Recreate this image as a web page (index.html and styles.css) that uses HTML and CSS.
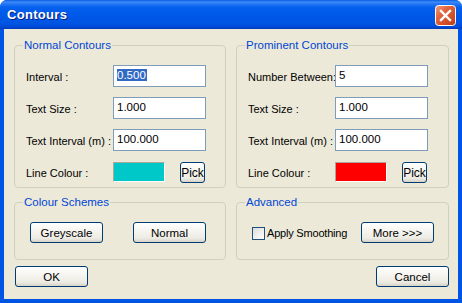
FILE: index.html
```html
<!DOCTYPE html>
<html>
<head>
<meta charset="utf-8">
<link rel="stylesheet" href="styles.css">
</head>
<body>
<div class="window">
  <div class="titlebar">
    <span class="title">Contours</span>
    <span class="close">
      <svg width="21" height="21" viewBox="0 0 21 21">
        <defs>
          <linearGradient id="cg" x1="0" y1="0" x2="1" y2="1">
            <stop offset="0" stop-color="#F0A080"/>
            <stop offset="0.35" stop-color="#E2653F"/>
            <stop offset="1" stop-color="#C23A14"/>
          </linearGradient>
        </defs>
        <rect x="0.5" y="0.5" width="20" height="20" rx="3" fill="url(#cg)" stroke="#FFFFFF"/>
        <path d="M6 6 L15 15 M15 6 L6 15" stroke="#FFFFFF" stroke-width="2.4" stroke-linecap="square"/>
      </svg>
    </span>
  </div>
  <div class="client">
    <div class="groups">
      <fieldset class="group">
        <legend>Normal Contours</legend>
        <div class="form">
          <span class="label">Interval :</span>
          <span class="field"><span class="sel">0.500</span></span>
          <span class="label">Text Size :</span>
          <span class="field">1.000</span>
          <span class="label">Text Interval (m) :</span>
          <span class="field">100.000</span>
          <span class="label last">Line Colour :</span>
          <span class="colour-row">
            <span class="swatch cyan"></span>
            <span class="btn pick">Pick</span>
          </span>
        </div>
      </fieldset>
      <fieldset class="group">
        <legend>Prominent Contours</legend>
        <div class="form">
          <span class="label">Number Between:</span>
          <span class="field">5</span>
          <span class="label">Text Size :</span>
          <span class="field">1.000</span>
          <span class="label">Text Interval (m) :</span>
          <span class="field">100.000</span>
          <span class="label last">Line Colour :</span>
          <span class="colour-row">
            <span class="swatch red"></span>
            <span class="btn pick">Pick</span>
          </span>
        </div>
      </fieldset>
      <fieldset class="group small">
        <legend>Colour Schemes</legend>
        <div class="btnrow">
          <span class="btn">Greyscale</span>
          <span class="btn">Normal</span>
        </div>
      </fieldset>
      <fieldset class="group small">
        <legend>Advanced</legend>
        <div class="btnrow adv">
          <span class="check"><span class="box"></span>Apply Smoothing</span>
          <span class="btn">More &gt;&gt;&gt;</span>
        </div>
      </fieldset>
    </div>
    <div class="footer">
      <span class="btn">OK</span>
      <span class="btn">Cancel</span>
    </div>
  </div>
</div>
</body>
</html>
```
FILE: styles.css
```css
html, body {
  margin: 0;
  padding: 0;
  background: #ffffff;
}
.window {
  width: 462px;
  height: 303px;
  display: flex;
  flex-direction: column;
  box-sizing: border-box;
  background: #0054E3;
  border-radius: 7px 7px 0 0;
  overflow: hidden;
  font-family: "Liberation Sans", Arial, sans-serif;
  font-size: 11px;
  color: #000000;
}
.titlebar {
  height: 29px;
  flex: none;
  display: flex;
  align-items: center;
  justify-content: space-between;
  padding: 0 6px 0 7px;
  box-sizing: border-box;
  background: linear-gradient(#0A5BE6 0%, #3D8CF6 7%, #2A7BF4 12%, #0460EE 25%, #0058E8 55%, #0055E3 80%, #0049D6 93%, #0039B5 100%);
}
.title {
  font-family: "Liberation Sans", sans-serif;
  font-weight: bold;
  font-size: 13px;
  color: #ffffff;
  text-shadow: 1px 1px 0 #0A1E80;
  letter-spacing: 0.3px;
}
.close {
  width: 21px;
  height: 21px;
  display: block;
  margin-top: 2px;
}
.close svg {
  display: block;
}
.client {
  flex: 1;
  margin: 0 4px 4px 4px;
  background: #ECE9D8;
  padding: 10px 9px 0 10px;
  display: flex;
  flex-direction: column;
}
.groups {
  display: grid;
  grid-template-columns: 212px 213px;
  column-gap: 10px;
  row-gap: 8px;
}
.group {
  margin: 0;
  padding: 13px 0 4px 11px;
  border: 1px solid #D0D0BF;
  border-radius: 4px;
  min-width: 0;
}
.group legend {
  color: #0046D5;
  padding: 0 1px 0 1px;
  margin-left: -3px;
  line-height: 13px;
  font-size: 11.5px;
}
.group.small legend {
  margin-left: -7px;
}
.form {
  display: grid;
  grid-template-columns: 87px 93px;
  grid-auto-rows: 22px;
  row-gap: 10px;
  align-items: center;
}
.label {
  padding-top: 1px;
  white-space: nowrap;
}
.label.last {
  margin-top: 1px;
  align-self: start;
  padding-top: 5px;
}
.field {
  height: 22px;
  box-sizing: border-box;
  border: 1px solid #7F9DB9;
  background: #ffffff;
  padding: 3px 0 0 3px;
  line-height: 13px;
  font-size: 11.5px;
}
.sel {
  background: #316AC5;
  color: #ffffff;
  display: inline-block;
  line-height: 12px;
  padding-right: 1px;
}
.colour-row {
  display: flex;
  align-items: flex-start;
  gap: 15px;
  height: 22px;
  margin-top: 1px;
  align-self: start;
}
.swatch {
  width: 52px;
  height: 20px;
  box-sizing: border-box;
  border-style: solid;
  border-width: 1px;
  border-color: #ACA899 #FFFFFF #FFFFFF #ACA899;
}
.cyan { background: #00C8C8; }
.red { background: #FF0000; }
.btn {
  width: 73px;
  height: 21px;
  flex: none;
  box-sizing: border-box;
  border: 1px solid #003C74;
  border-radius: 3px;
  background: linear-gradient(#FFFFFF 0%, #F6F5F0 40%, #ECEBE4 80%, #D8D3C6 100%);
  display: flex;
  align-items: center;
  justify-content: center;
  font-size: 11.5px;
  padding-top: 1px;
}
.btn.pick {
  width: 25px;
  font-size: 12px;
}
.group.small {
  padding: 13px 0 16px 15px;
}
.btnrow {
  display: flex;
  gap: 30px;
}
.btnrow.adv {
  gap: 15px;
  align-items: center;
}
.check {
  display: flex;
  flex: none;
  width: 94px;
  align-items: center;
  gap: 2px;
  white-space: nowrap;
  font-size: 11px;
  letter-spacing: -0.2px;
}
.box {
  width: 13px;
  height: 13px;
  flex: none;
  box-sizing: border-box;
  border: 1px solid #1C5180;
  background: linear-gradient(135deg, #DCDCD7, #FFFFFF);
  margin-top: 1px;
}
.footer {
  display: flex;
  justify-content: space-between;
  margin-top: 6px;
  padding-left: 1px;
}
```
